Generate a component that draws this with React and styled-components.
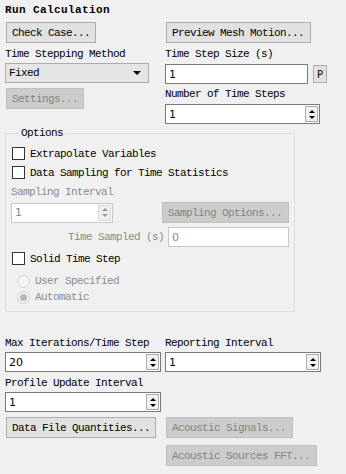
import React from "react";
import styled, { createGlobalStyle } from "styled-components";

const GlobalStyle = createGlobalStyle`
  html, body {
    margin: 0;
    padding: 0;
    background: #f0f0f0;
  }
  body {
    font-family: "Liberation Mono", "DejaVu Sans Mono", monospace;
    font-size: 11px;
    letter-spacing: -0.6px;
    color: #000;
  }
`;

const Page = styled.div`
  width: 346px;
  height: 474px;
  box-sizing: border-box;
  padding: 3px 0 0 5px;
  background: #f0f0f0;
  overflow: hidden;
`;

const Title = styled.div`
  font-weight: bold;
  letter-spacing: 0.4px;
  height: 14px;
  line-height: 14px;
`;

const Columns = styled.div`
  display: grid;
  grid-template-columns: 160px 1fr;
  margin-top: ${(p) => p.$mt || "5px"};
`;

const Column = styled.div`
  display: flex;
  flex-direction: column;
  align-items: flex-start;
`;

const Button = styled.button`
  font: inherit;
  letter-spacing: inherit;
  height: 21px;
  padding: 0 5px;
  margin: ${(p) => p.$m || "0"};
  background: ${(p) => (p.disabled ? "#cccccc" : "#e1e1e1")};
  color: ${(p) => (p.disabled ? "#838383" : "#000")};
  border: 1px solid ${(p) => (p.disabled ? "#bfbfbf" : "#adadad")};
  border-radius: 0;
  text-align: left;
  width: ${(p) => p.$w || "auto"};
  white-space: nowrap;
`;

const Label = styled.div`
  height: 13px;
  line-height: 13px;
  margin: ${(p) => p.$m || "0"};
  color: ${(p) => (p.$dim ? "#8a8a8a" : "#000")};
  white-space: nowrap;
`;

const Select = styled.div`
  box-sizing: border-box;
  width: 144px;
  height: 20px;
  margin-top: ${(p) => p.$mt || "0"};
  background: #e5e5e5;
  border: 1px solid #acacac;
  display: flex;
  align-items: center;
  justify-content: space-between;
  padding: 0 7px 0 3px;
`;

const Caret = styled.span`
  width: 0;
  height: 0;
  border-left: 4px solid transparent;
  border-right: 4px solid transparent;
  border-top: 4px solid #000;
`;

const FieldRow = styled.div`
  display: flex;
  align-items: center;
  gap: 5px;
  margin-top: ${(p) => p.$mt || "0"};
`;

const Field = styled.div`
  box-sizing: border-box;
  width: ${(p) => p.$w};
  height: ${(p) => p.$h || "20px"};
  margin-top: ${(p) => p.$mt || "0"};
  background: #fff;
  border: 1px solid ${(p) => (p.$dim ? "#c8c8c8" : "#7a7a7a")};
  color: ${(p) => (p.$dim ? "#8a8a8a" : "#000")};
  display: flex;
  align-items: center;
  padding-left: 3px;
  font-family: "DejaVu Sans", sans-serif;
  letter-spacing: 0;
  font-size: 11px;
`;

const FieldText = styled.span`
  flex: 1;
`;

const Spin = styled.div`
  box-sizing: border-box;
  width: 13px;
  height: 16px;
  margin-right: 1px;
  border: 1px solid ${(p) => (p.$dim ? "#d8d8d8" : "#adadad")};
  background: #f0f0f0;
  display: flex;
  flex-direction: column;
  align-items: center;
  justify-content: space-around;
  padding: 1px 0;
`;

const Arrow = styled.span`
  width: 0;
  height: 0;
  border-left: 3px solid transparent;
  border-right: 3px solid transparent;
  ${(p) =>
    p.$up
      ? `border-bottom: 3px solid ${p.$dim ? "#9a9a9a" : "#000"};`
      : `border-top: 3px solid ${p.$dim ? "#9a9a9a" : "#000"};`}
`;

const SmallButton = styled.div`
  box-sizing: border-box;
  width: 14px;
  height: 18px;
  border: 1px solid #adadad;
  background: #e1e1e1;
  display: flex;
  align-items: center;
  justify-content: center;
  font-family: "DejaVu Sans", sans-serif;
  letter-spacing: 0;
  font-size: 10px;
`;

const Group = styled.fieldset`
  width: 290px;
  box-sizing: border-box;
  margin: 3px 0 0 0;
  padding: 2px 5px 8px 5px;
  border: 1px solid #dcdcdc;
  height: 185px;
`;

const Legend = styled.legend`
  padding: 0 2px;
  margin-left: 8px;
  line-height: 12px;
`;

const Check = styled.div`
  display: flex;
  align-items: center;
  gap: 5px;
  height: 19px;
  margin-top: ${(p) => p.$mt || "0"};
`;

const Box = styled.span`
  box-sizing: border-box;
  width: 13px;
  height: 13px;
  border: 1px solid #333;
  background: #fff;
  margin-left: 1px;
`;

const Radio = styled.div`
  display: flex;
  align-items: center;
  gap: 5px;
  height: 16px;
  padding-left: 6px;
  margin-top: ${(p) => p.$mt || "0"};
  color: #8a8a8a;
`;

const Dot = styled.span`
  box-sizing: border-box;
  width: 13px;
  height: 13px;
  border-radius: 50%;
  border: 1px solid #cfcfcf;
  background: #f4f4f4;
  display: flex;
  align-items: center;
  justify-content: center;
  &::after {
    content: "";
    width: 7px;
    height: 7px;
    border-radius: 50%;
    background: ${(p) => (p.$on ? "#b8b8b8" : "transparent")};
  }
`;

const Row = styled.div`
  display: flex;
  align-items: center;
  margin-top: ${(p) => p.$mt || "0"};
`;

const Spacer = styled.div`
  flex: 1;
`;

const SpinField = ({ w, value, dim, mt }) => (
  <Field $w={w} $dim={dim} $mt={mt}>
    <FieldText>{value}</FieldText>
    <Spin $dim={dim}>
      <Arrow $up $dim={dim} />
      <Arrow $dim={dim} />
    </Spin>
  </Field>
);

const App = () => {
  return (
    <Page>
      <GlobalStyle />
      <Title>Run Calculation</Title>
      <Columns>
        <Column>
          <Button $m="0 0 0 1px" $w="90px">Check Case...</Button>
          <Label $m="5px 0 0 0">Time Stepping Method</Label>
          <Select $mt="2px">
            <span>Fixed</span>
            <Caret />
          </Select>
          <Button disabled $m="5px 0 0 1px" $w="78px">Settings...</Button>
        </Column>
        <Column>
          <Button $m="0 0 0 1px" $w="145px">Preview Mesh Motion...</Button>
          <Label $m="5px 0 0 0">Time Step Size (s)</Label>
          <FieldRow $mt="3px">
            <Field $w="143px">1</Field>
            <SmallButton>P</SmallButton>
          </FieldRow>
          <Label $m="4px 0 0 0">Number of Time Steps</Label>
          <SpinField w="155px" value="1" mt="3px" />
        </Column>
      </Columns>

      <Group>
        <Legend>Options</Legend>
        <Check $mt="3px">
          <Box />
          <span>Extrapolate Variables</span>
        </Check>
        <Check>
          <Box />
          <span>Data Sampling for Time Statistics</span>
        </Check>
        <Label $dim $m="4px 0 0 0">Sampling Interval</Label>
        <Row $mt="3px">
          <SpinField w="102px" value="1" dim />
          <Spacer />
          <Button disabled $w="127px">Sampling Options...</Button>
        </Row>
        <Row $mt="4px">
          <Spacer />
          <Label $dim $m="0 4px 0 0">Time Sampled (s)</Label>
          <Field $w="121px" $dim>0</Field>
        </Row>
        <Check $mt="2px">
          <Box />
          <span>Solid Time Step</span>
        </Check>
        <Radio $mt="5px">
          <Dot />
          <span>User Specified</span>
        </Radio>
        <Radio>
          <Dot $on />
          <span>Automatic</span>
        </Radio>
      </Group>

      <Columns $mt="25px">
        <Column>
          <Label>Max Iterations/Time Step</Label>
          <SpinField w="156px" value="20" mt="2px" />
          <Label $m="5px 0 0 0">Profile Update Interval</Label>
          <SpinField w="156px" value="1" mt="2px" />
          <Button $m="5px 0 0 1px" $w="150px">Data File Quantities...</Button>
        </Column>
        <Column>
          <Label>Reporting Interval</Label>
          <SpinField w="156px" value="1" mt="2px" />
          <Button disabled $m="45px 0 0 1px" $w="127px">Acoustic Signals...</Button>
          <Button disabled $m="7px 0 0 1px" $w="151px">Acoustic Sources FFT...</Button>
        </Column>
      </Columns>
    </Page>
  );
};

export default App;
